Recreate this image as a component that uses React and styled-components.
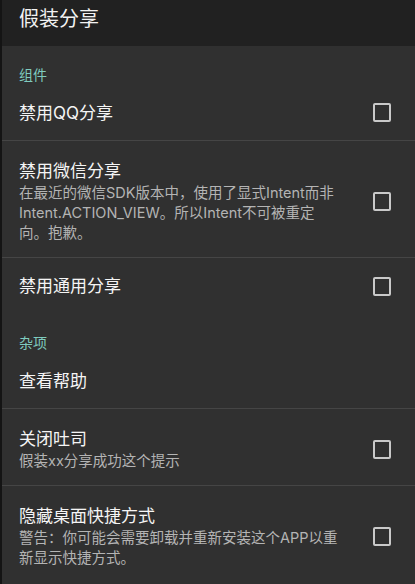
import React from "react";
import styled, { createGlobalStyle } from "styled-components";

const Global = createGlobalStyle`
  html, body { margin: 0; padding: 0; background: #303030; }
  body { font-family: Inter, "Noto Sans CJK SC", sans-serif; }
  * { box-sizing: border-box; }
`;

const Screen = styled.div`
  width: 415px;
  height: 584px;
  overflow: hidden;
  background: #303030;
  border-left: 2px solid #141414;
  display: flex;
  flex-direction: column;
`;

const TitleBar = styled.header`
  height: 46px;
  flex: none;
  background: #212121;
  padding: 7px 0 0 17px;
  color: #f2f2f2;
  font-size: 20px;
  line-height: 24px;
`;

const Category = styled.div`
  height: 39px;
  flex: none;
  padding: 18px 0 0 17px;
  color: #7fcbbf;
  font-size: 14px;
  line-height: 22px;
`;

const Row = styled.div`
  display: flex;
  flex: none;
  align-items: center;
  min-height: ${(p) => (p.$tall ? "auto" : "56px")};
  padding: ${(p) => (p.$tall ? "18px" : "0")} 24px ${(p) => (p.$tall ? "14px" : "0")} 17px;
  border-bottom: ${(p) => (p.$divider ? "1px solid #454545" : "none")};
`;

const TextCol = styled.div`
  flex: 1;
  min-width: 0;
  margin-right: 8px;
`;

const Title = styled.div`
  color: #f5f5f5;
  font-size: 17px;
  line-height: 24px;
`;

const Summary = styled.div`
  color: #b4b4b4;
  font-size: 14.5px;
  line-height: 20px;
  white-space: pre-line;
`;

const Box = styled.span`
  flex: none;
  width: 18px;
  height: 19px;
  border: 2px solid #c9c9c9;
  border-radius: 2px;
`;

function Pref({ title, summary, checkbox = true, divider = false }) {
  return (
    <Row $tall={!!summary} $divider={divider}>
      <TextCol>
        <Title>{title}</Title>
        {summary && <Summary>{summary}</Summary>}
      </TextCol>
      {checkbox && <Box />}
    </Row>
  );
}

export default function App() {
  return (
    <>
      <Global />
      <Screen>
        <TitleBar>假装分享</TitleBar>
        <Category>组件</Category>
        <Pref title="禁用QQ分享" divider />
        <Pref
          title="禁用微信分享"
          summary={"在最近的微信SDK版本中，使用了显式Intent而非\nIntent.ACTION_VIEW。所以Intent不可被重定\n向。抱歉。"}
          divider
        />
        <Pref title="禁用通用分享" />
        <Category>杂项</Category>
        <Pref title="查看帮助" checkbox={false} divider />
        <Pref title="关闭吐司" summary="假装xx分享成功这个提示" divider />
        <Pref
          title="隐藏桌面快捷方式"
          summary={"警告：你可能会需要卸载并重新安装这个APP以重\n新显示快捷方式。"}
        />
      </Screen>
    </>
  );
}
